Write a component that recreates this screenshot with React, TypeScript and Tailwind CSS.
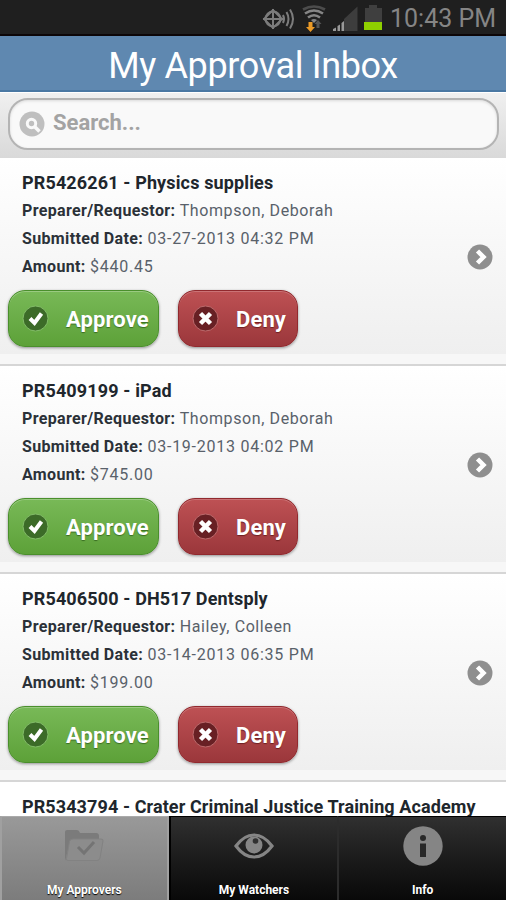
import clsx from "clsx";

interface Requisition {
  id: string;
  title: string;
  preparer: string;
  submitted: string;
  amount: string;
}

const requisitions: Requisition[] = [
  {
    id: "PR5426261",
    title: "Physics supplies",
    preparer: "Thompson, Deborah",
    submitted: "03-27-2013 04:32 PM",
    amount: "$440.45",
  },
  {
    id: "PR5409199",
    title: "iPad",
    preparer: "Thompson, Deborah",
    submitted: "03-19-2013 04:02 PM",
    amount: "$745.00",
  },
  {
    id: "PR5406500",
    title: "DH517 Dentsply",
    preparer: "Hailey, Colleen",
    submitted: "03-14-2013 06:35 PM",
    amount: "$199.00",
  },
];

function StatusBar() {
  return (
    <div className="flex h-9 shrink-0 justify-end border-b-2 border-[#0c0608] bg-[#1f1f1f] pr-[10px]">
      <svg width="122" height="34" viewBox="0 0 122 34" fill="none" className="shrink-0">
        {/* GPS */}
        <g stroke="#7c7c7c" strokeWidth="2">
          <circle cx="31" cy="19" r="7.5" />
          <path d="M21 19h20M31 9v20" />
          <path d="M22 19l9-9 9 9-9 9z" strokeWidth="1.800" />
          <path d="M41 15q2 4 0 8M44.500 12q4 7 0 14M48 9.500q6 9.500 0 19" />
        </g>
        {/* Wi-Fi */}
        <g stroke="#858585" strokeWidth="2.600">
          <path d="M61 9.500q11-6 22 0" stroke="#4c4c4c" />
          <path d="M63 13.500q9-6 18 0" />
          <path d="M66 17.500q6-4.500 12 0" />
        </g>
        <path d="M69 20q3-2 6 0l-3 3z" fill="#858585" />
        <path d="M66.500 22h4v5h2.500l-4.500 5-4.500-5h2.500z" fill="#eb9a27" />
        <path d="M74.500 28v-4h-2l3.500-4 3.500 4h-2v4z" fill="#555" />
        {/* Signal */}
        <path d="M115.500 6.500V31H102V19z" fill="#3d3d3d" />
        <path d="M91 31v-2l3-1.500V31zM95.500 31v-5l2.500-1.500V31zM99.500 31v-8l2.500-2V31z" fill="#999" />
      </svg>
      <div className="mt-[5px] flex w-[18px] shrink-0 flex-col items-center">
        <div className="h-[3px] w-2 bg-[#3f3f3f]" />
        <div className="h-[14px] w-[17px] bg-[#3f3f3f]" />
        <div className="h-[8px] w-[18px] bg-[#8fd000]" />
      </div>
      <span className="ml-2 w-[106px] whitespace-nowrap text-[25px] leading-[38px] text-[#858585]">
        10:43 PM
      </span>
    </div>
  );
}

function SearchBar() {
  return (
    <div className="h-[66px] shrink-0 border-t border-white bg-linear-to-b from-[#f0f0f0] to-[#d9d9d9] pl-2 pr-[7px] pt-[5px]">
      <div className="flex h-[52px] items-center rounded-[20px] border-2 border-[#b4b4b4] bg-[#f9f9f9] pl-[9px] shadow-[inset_0_1px_3px_rgba(0,0,0,0.12)]">
        <svg width="26" height="26" viewBox="0 0 26 26" fill="none">
          <circle cx="13" cy="13" r="12.500" fill="#bfbfbf" />
          <circle cx="12.500" cy="12.500" r="4.200" stroke="#f9f9f9" strokeWidth="3" />
          <path d="M16 16l4.500 4.500" stroke="#f9f9f9" strokeWidth="3.500" />
        </svg>
        <span className="-mt-0.5 ml-2 text-[22px] font-bold leading-6 text-[#a3a3a3]">Search...</span>
      </div>
    </div>
  );
}

function ApproveButton() {
  return (
    <button className="flex h-[57px] w-[151px] items-center rounded-[17px] border-[1.5px] border-[#4a8f2c] bg-linear-to-b from-[#78b957] to-[#5da138] pl-[13px] shadow-[0_1px_3px_rgba(0,0,0,0.4),inset_0_1px_0_rgba(255,255,255,0.25)]">
      <svg width="27" height="27" viewBox="0 0 27 27" fill="none">
        <circle cx="13.500" cy="13.500" r="12.500" fill="#3c6b28" stroke="#83bd68" />
        <path d="M8 13.500l4.500 4.500 7-9.500" stroke="#fff" strokeWidth="4" />
      </svg>
      <span className="ml-[17px] mt-0.5 whitespace-nowrap text-[22px] font-bold leading-7 tracking-[0.1px] text-white [text-shadow:0_1px_1px_#3a6d22]">
        Approve
      </span>
    </button>
  );
}

function DenyButton() {
  return (
    <button className="flex h-[57px] w-[120px] items-center rounded-[17px] border-[1.5px] border-[#91292e] bg-linear-to-b from-[#be5154] to-[#9b373b] pl-[13px] shadow-[0_1px_3px_rgba(0,0,0,0.4),inset_0_1px_0_rgba(255,255,255,0.2)]">
      <svg width="27" height="27" viewBox="0 0 27 27" fill="none">
        <circle cx="13.500" cy="13.500" r="12.500" fill="#682024" stroke="#bd6a6c" />
        <path d="M8.500 8.500l10 10M18.500 8.500l-10 10" stroke="#fff" strokeWidth="4.500" />
      </svg>
      <span className="ml-[17px] mt-0.5 whitespace-nowrap text-[22px] font-bold leading-7 tracking-[0.1px] text-white [text-shadow:0_1px_1px_#6d2022]">
        Deny
      </span>
    </button>
  );
}

function Field({ label, value }: { label: string; value: string }) {
  return (
    <div className="h-7 text-[16px] leading-7 tracking-[0.35px] text-[#59616a]">
      <span className="font-bold text-[#2b3138]">{label}:</span>{" "}
      <span className={/\d/.test(value) ? "tracking-[0.75px]" : "tracking-[0.6px]"}>{value}</span>
    </div>
  );
}

function RequisitionRow({ item }: { item: Requisition }) {
  return (
    <li className="flex h-52 shrink-0 flex-col border-b-2 border-[#d6d6d6] bg-[#f7f7f7]">
      <div className="flex h-[196px] bg-linear-to-b from-white to-[#efefef]">
        <div className="flex-1">
          <div className="pl-[22px] pt-[11px]">
            <h2 className="h-7 whitespace-nowrap text-[18px] font-bold leading-7 tracking-[0.14px] text-[#20262c]">
              {item.id} - {item.title}
            </h2>
            <Field label="Preparer/Requestor" value={item.preparer} />
            <Field label="Submitted Date" value={item.submitted} />
            <Field label="Amount" value={item.amount} />
          </div>
          <div className="ml-2 mt-[9px] flex gap-[19px]">
            <ApproveButton />
            <DenyButton />
          </div>
        </div>
        <svg width="26" height="26" viewBox="0 0 26 26" fill="none" className="mr-[13px] mt-[86px]">
          <circle cx="13" cy="13" r="12.500" fill="#8f8f8f" />
          <path d="M10.500 7l6 6-6 6" stroke="#fff" strokeWidth="4.500" />
        </svg>
      </div>
    </li>
  );
}

const folderIcon = (
  <svg width="40" height="40" viewBox="0 0 40 40" fill="none">
    <path d="M1 35V6q0-2 2-2h10q2 0 3 3h16q3 0 3 3v4H10q-3 0-4 3z" fill="#7b7b7b" />
    <path d="M9 13h28q2.500 0 2 2l-3 17q-.5 2.500-3 2.500H4q-2 0-1.500-2l3-17q.5-2.500 3.500-2.500z" fill="#8c8c8c" stroke="#828282" />
    <path d="M14 21l6 6L30 16" stroke="#747474" strokeWidth="3" />
  </svg>
);

const eyeIcon = (
  <svg width="40" height="40" viewBox="0 0 40 40" fill="none">
    <path d="M2 20Q10 9 20 9t18 11Q30 31 20 31T2 20z" stroke="#858585" strokeWidth="3.200" />
    <circle cx="20" cy="19" r="8.500" fill="#858585" />
    <circle cx="21.500" cy="15" r="2.800" fill="#303030" />
  </svg>
);

const infoIcon = (
  <svg width="40" height="40" viewBox="0 0 40 40" fill="none">
    <circle cx="20" cy="20" r="19.700" fill="#858585" />
    <circle cx="20" cy="12" r="3" fill="#282828" />
    <path d="M17 17.500h6V31h-6z" fill="#282828" />
  </svg>
);

const tabs = [
  { label: "My Approvers", icon: folderIcon, active: true },
  { label: "My Watchers", icon: eyeIcon, active: false },
  { label: "Info", icon: infoIcon, active: false },
];

function TabBar() {
  return (
    <nav className="grid h-[84px] shrink-0 grid-cols-3">
      {tabs.map((tab) => (
        <div
          key={tab.label}
          className={clsx(
            "flex flex-col items-center border-t pt-[9px]",
            tab.active
              ? "border-x-2 border-t-[#aaa] border-x-[#a0a0a0] bg-linear-to-b from-[#999] to-[#7c7c7c]"
              : "border-l-2 border-t-black border-l-[#2c2c2c] bg-linear-to-b from-[#303030] to-[#090909] first-of-type:border-l-0 nth-2:border-l-black"
          )}
        >
          {tab.icon}
          <span className="mt-[15px] text-[12px] font-bold leading-[18px] text-white [text-shadow:0_1px_1px_#000]">
            {tab.label}
          </span>
        </div>
      ))}
    </nav>
  );
}

export default function App() {
  return (
    <div className="flex h-[900px] w-[506px] flex-col overflow-hidden bg-white font-['Roboto',sans-serif]">
      <StatusBar />
      <header className="h-14 shrink-0 border-b-2 border-[#4a78a3] bg-[#5f88b0] text-center text-[36px] leading-[60px] tracking-[-0.36px] text-white">
        My Approval Inbox
      </header>
      <SearchBar />
      <ul className="flex min-h-0 flex-1 flex-col overflow-hidden">
        {requisitions.map((item) => (
          <RequisitionRow key={item.id} item={item} />
        ))}
        <li className="h-[34px] shrink-0 overflow-hidden whitespace-nowrap pl-[22px] pt-[11px] text-[18px] font-bold leading-7 tracking-[0.1px] text-[#20262c]">
          PR5343794 - Crater Criminal Justice Training Academy
        </li>
      </ul>
      <TabBar />
    </div>
  );
}
